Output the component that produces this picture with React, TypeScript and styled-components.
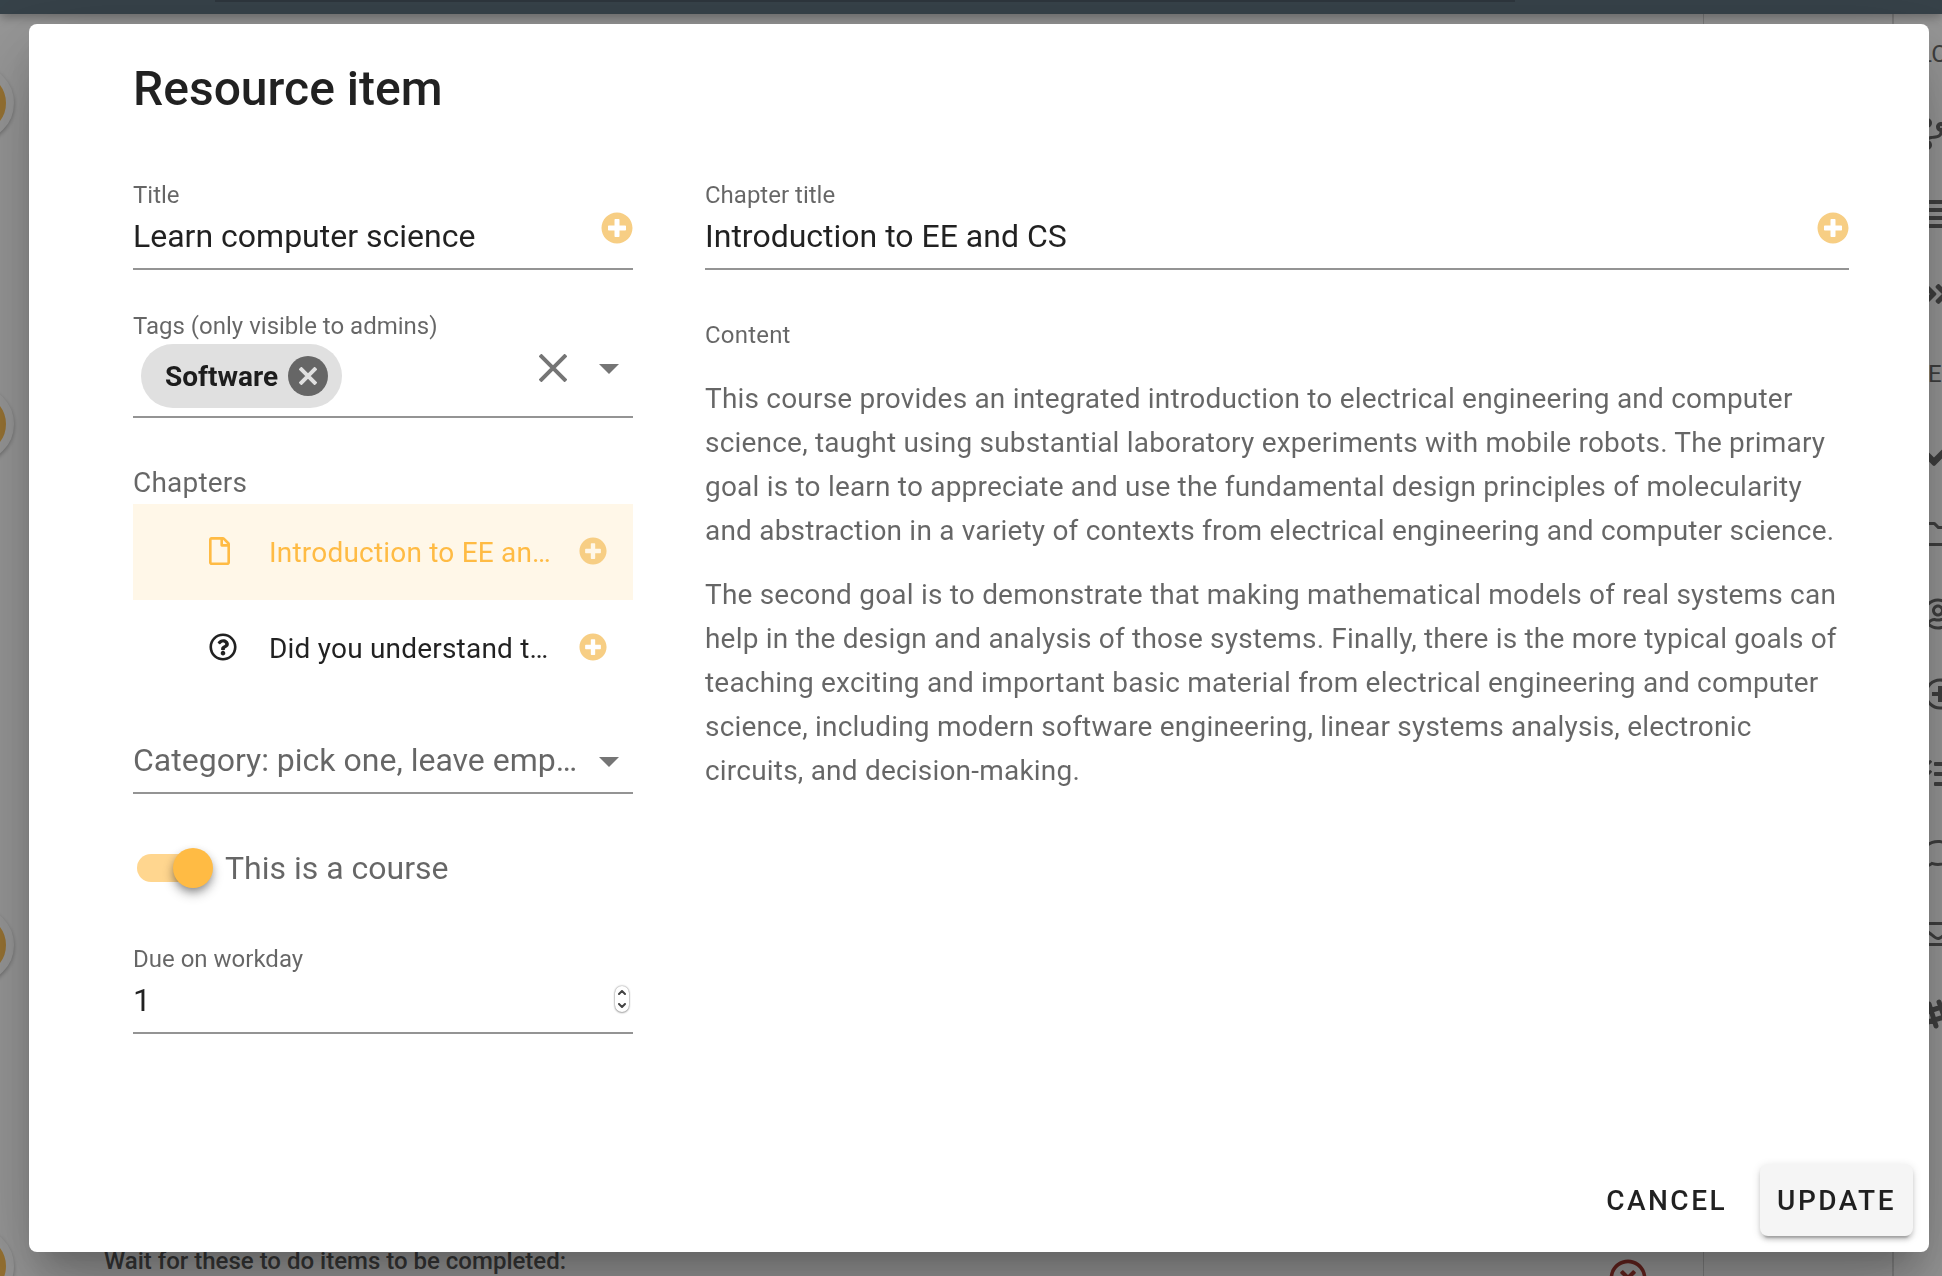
import React, { useState } from "react";
import styled, { createGlobalStyle, css } from "styled-components";
import {
  FaAlignJustify,
  FaAngleDoubleRight,
  FaCheck,
  FaCodeBranch,
  FaPlusCircle,
  FaRegComment,
  FaRegEnvelope,
  FaRegFile,
  FaRegFolder,
  FaRegQuestionCircle,
  FaRegTimesCircle,
  FaRegUserCircle,
  FaTasks,
} from "react-icons/fa";

const ink = "rgba(0, 0, 0, 0.87)";
const muted = "rgba(0, 0, 0, 0.6)";
const accent = "#ffbb44";
const bodySpacing = "0.2px";

const GlobalStyle = createGlobalStyle`
  *, *::before, *::after { box-sizing: border-box; }
  body {
    margin: 0;
    font-family: Roboto, "Liberation Sans", sans-serif;
    color: ${ink};
    background: #fff;
  }
  button, input, select { font: inherit; color: inherit; }
  button { border: 0; padding: 0; background: none; cursor: pointer; }
  svg { display: block; }
`;

/* ---------- page behind the dialog ---------- */

const Page = styled.div`
  height: 100vh;
  overflow: hidden;
  display: flex;
  flex-direction: column;
`;

const TopBar = styled.header`
  flex: none;
  height: 14px;
  padding: 0 427px 0 215px;
  background: #4c616e;
  box-shadow: 0 4px 10px rgba(0, 0, 0, 0.3);
  z-index: 1;
`;

const SearchStrip = styled.div`
  height: 2px;
  background: #3c4b58;
`;

const PageBody = styled.div`
  flex: 1;
  min-height: 0;
  display: flex;
`;

const Timeline = styled.ol`
  position: relative;
  width: 52px;
  margin: 0;
  padding: 0;
  list-style: none;
`;

const Dot = styled.li<{ $top: number }>`
  position: absolute;
  left: -62px;
  top: ${(p) => p.$top}px;
  width: 76px;
  height: 76px;
  border: 8px solid #fff;
  border-radius: 50%;
  background: ${accent};
  box-shadow: 0 2px 4px rgba(0, 0, 0, 0.3);
`;

const Cards = styled.main`
  flex: 1;
  display: flex;
  align-items: flex-end;
  justify-content: space-between;
  padding: 0 56px 0 52px;
  border-right: 1px solid #d0d0d0;
`;

const WaitText = styled.p`
  margin: 0 0 -1px;
  font-size: 24px;
  line-height: 32px;
  font-weight: 500;
  color: #4c4c4c;
`;

const Remove = styled.button`
  height: 17px;
  font-size: 38px;
  color: #a2281f;
  overflow: visible;
`;

const Gutter = styled.div`
  width: 190px;
  border-right: 2px solid #d6d6d6;
`;

const Sidebar = styled.nav`
  width: 48px;
  display: flex;
  flex-direction: column;
`;

const SideItem = styled.div<{ $indent?: number }>`
  flex: none;
  height: 80px;
  padding-left: ${(p) => p.$indent ?? 28}px;
  display: flex;
  align-items: center;
  font-size: 24px;
  color: #5c5c5c;

  svg {
    flex: none;
    width: 32px;
    height: 32px;
  }
`;

/* ---------- dialog ---------- */

const Overlay = styled.div`
  position: fixed;
  inset: 0;
  z-index: 2;
  display: flex;
  padding: 24px 13px 24px 29px;
  background: rgba(33, 33, 33, 0.46);
`;

const Dialog = styled.form`
  flex: 1;
  display: flex;
  flex-direction: column;
  padding: 33px 16px 16px;
  border-radius: 8px;
  background: #fff;
  box-shadow: 0 22px 30px -14px rgba(0, 0, 0, 0.2),
    0 48px 76px 6px rgba(0, 0, 0, 0.14), 0 18px 92px 16px rgba(0, 0, 0, 0.12);
`;

const Heading = styled.h1`
  margin: 0 88px;
  font-size: 48px;
  line-height: 64px;
  font-weight: 500;
`;

const Columns = styled.div`
  display: grid;
  grid-template-columns: 1fr 2fr;
  margin: 58px 64px 0 88px;
`;

const Side = styled.div`
  display: flex;
  flex-direction: column;
  gap: 40px;
  min-width: 0;
  padding-right: 72px;
`;

const Article = styled.div`
  min-width: 0;
`;

const Field = styled.div`
  display: flex;
  flex-direction: column;
`;

const Label = styled.label`
  font-size: 24px;
  line-height: 32px;
  color: ${muted};
`;

const Control = styled.div<{ $tall?: boolean }>`
  display: flex;
  align-items: flex-start;
  height: ${(p) => (p.$tall ? 76 : 59)}px;
  border-bottom: 2px solid #949494;
`;

const fieldText = css`
  flex: 1;
  min-width: 0;
  height: 50px;
  padding: 0;
  border: 0;
  outline: 0;
  background: none;
  font-size: 32px;
  appearance: none;
`;

const TextInput = styled.input`
  ${fieldText}
`;

const NumberInput = styled.input`
  ${fieldText}
  -moz-appearance: textfield;
  &::-webkit-inner-spin-button { display: none; }
`;

const Select = styled.select`
  ${fieldText}
  color: ${muted};
`;

const AddButton = styled.button<{ $size: number }>`
  flex: none;
  height: 34px;
  display: flex;
  align-items: center;
  font-size: ${(p) => p.$size}px;
  color: #f7ce84;
`;

const Chip = styled.span`
  display: flex;
  align-items: center;
  gap: 10px;
  height: 64px;
  margin: 2px auto 0 8px;
  padding: 0 14px 0 24px;
  border-radius: 32px;
  background: #e0e0e0;
  font-size: 28px;
  font-weight: 700;
`;

const ChipClose = styled.button`
  width: 40px;
  height: 40px;
  border-radius: 50%;
  background: #666;
  display: grid;
  place-items: center;
`;

const IconSlot = styled.button`
  height: 52px;
  display: flex;
  align-items: center;
  margin-right: 32px;
`;

const Caret = styled.span`
  flex: none;
  height: 53px;
  display: flex;
  align-items: center;
  margin-right: 14px;
  pointer-events: none;

  &::after {
    content: "";
    border: 10px solid transparent;
    border-top-color: #757575;
    border-bottom: 0;
  }
`;

const Chapters = styled.section`
  padding-top: 6px;
`;

const ChaptersTitle = styled.h2`
  margin: 0 0 2px;
  font-size: 28px;
  line-height: 38px;
  font-weight: 400;
  letter-spacing: ${bodySpacing};
  color: ${muted};
`;

const ChapterList = styled.ul`
  margin: 0 0 -1px;
  padding: 0;
  list-style: none;
`;

const ChapterRow = styled.li<{ $active?: boolean }>`
  display: flex;
  align-items: center;
  height: 96px;
  padding: 0 26px 2px 76px;
  color: ${(p) => (p.$active ? accent : ink)};
  background: ${(p) => (p.$active ? "#fff7e8" : "transparent")};
`;

const ChapterLink = styled.button`
  flex: 1;
  min-width: 0;
  display: grid;
  grid-template-columns: 60px 1fr;
  align-items: center;
  text-align: left;
  font-size: 28px;
  line-height: 40px;
  letter-spacing: ${bodySpacing};
  white-space: nowrap;
`;

const ChapterName = styled.span`
  padding-top: 4px;
`;

const SwitchRow = styled.label`
  display: flex;
  align-items: center;
  gap: 12px;
  height: 48px;
  margin: 10px 0 11px;
  padding-left: 4px;
  font-size: 32px;
  color: ${muted};
`;

const Switch = styled.input`
  appearance: none;
  flex: none;
  width: 76px;
  height: 28px;
  margin: 0;
  border-radius: 14px;
  background: linear-gradient(#ffd68f, #ffd68f) left / 60px 28px no-repeat;
  display: flex;
  align-items: center;

  &::before {
    content: "";
    width: 40px;
    height: 40px;
    border-radius: 50%;
    background: #bdbdbd;
    box-shadow: 0 4px 8px -2px rgba(0, 0, 0, 0.35), 0 6px 12px rgba(0, 0, 0, 0.24);
  }

  &:checked::before {
    margin-left: 36px;
    background: ${accent};
  }
`;

const Stepper = styled.span`
  flex: none;
  display: flex;
  flex-direction: column;
  width: 14px;
  height: 26px;
  margin: 11px 4px 0 0;
  border-radius: 7px;
  background: #fff;
  box-shadow: 0 0 2px rgba(0, 0, 0, 0.5), 0 1px 2px rgba(0, 0, 0, 0.25);
`;

const Step = styled.button`
  flex: 1;
  display: grid;
  place-items: center;
`;

const ContentLabel = styled.h2`
  margin: 48px 0 25px;
  font-size: 24px;
  line-height: 34px;
  font-weight: 400;
  letter-spacing: ${bodySpacing};
  color: ${muted};
`;

const Paragraph = styled.p`
  margin: 0 0 20px;
  font-size: 28px;
  line-height: 44px;
  letter-spacing: ${bodySpacing};
  color: ${muted};
`;

const Actions = styled.footer`
  display: flex;
  justify-content: flex-end;
  gap: 16px;
  margin-top: auto;
`;

const ActionButton = styled.button<{ $raised?: boolean }>`
  height: 72px;
  padding: 0 17px;
  border-radius: 8px;
  font-size: 28px;
  font-weight: 500;
  letter-spacing: 2.5px;
  color: ${ink};
  ${(p) =>
    p.$raised &&
    css`
      background: #f5f5f5;
      box-shadow: 0 6px 2px -4px rgba(0, 0, 0, 0.2),
        0 4px 4px rgba(0, 0, 0, 0.14), 0 2px 10px rgba(0, 0, 0, 0.12);
    `}
`;

const Cross = ({ size, color }: { size: number; color: string }) => (
  <svg width={size} height={size} viewBox={`0 0 ${size} ${size}`} stroke={color} strokeWidth="4">
    <path d={`M1 1L${size - 1} ${size - 1}M${size - 1} 1L1 ${size - 1}`} />
  </svg>
);

const Chevron = ({ up }: { up?: boolean }) => (
  <svg width="8" height="5" viewBox="0 0 8 5" fill="none" stroke="#444" strokeWidth="2" strokeLinecap="round" strokeLinejoin="round">
    <path d={up ? "M1 4L4 1L7 4" : "M1 1L4 4L7 1"} />
  </svg>
);

function PlusRing() {
  return (
    <svg viewBox="-2 0 32 32" fill="none" stroke="currentColor" strokeWidth="3">
      <circle cx="16" cy="16" r="14" />
      <path d="M8 16H24M16 8V24" strokeWidth="4" />
    </svg>
  );
}

function Hash() {
  return (
    <svg viewBox="0 0 32 32" fill="none" stroke="currentColor" strokeWidth="5" strokeLinecap="round">
      <path d="M7 6L14 28M17 4L24 24M4 14L26 7M6 24L28 17" />
    </svg>
  );
}

const sideIcons = [FaRegFolder, FaRegUserCircle, PlusRing, FaTasks, FaRegComment, FaRegEnvelope, Hash];

const paragraphs = [
  "This course provides an integrated introduction to electrical engineering and computer science, taught using substantial laboratory experiments with mobile robots. The primary goal is to learn to appreciate and use the fundamental design principles of molecularity and abstraction in a variety of contexts from electrical engineering and computer science.",
  "The second goal is to demonstrate that making mathematical models of real systems can help in the design and analysis of those systems. Finally, there is the more typical goals of teaching exciting and important basic material from electrical engineering and computer science, including modern software engineering, linear systems analysis, electronic circuits, and decision-making.",
];

export default function App() {
  const [title, setTitle] = useState("Learn computer science");
  const [chapterTitle, setChapterTitle] = useState("Introduction to EE and CS");
  const [course, setCourse] = useState(true);
  const [day, setDay] = useState(1);

  return (
    <>
      <GlobalStyle />
      <Page>
        <TopBar>
          <SearchStrip />
        </TopBar>
        <PageBody>
          <Timeline>
            {[51, 372, 893, 1214].map((top) => (
              <Dot key={top} $top={top} />
            ))}
          </Timeline>
          <Cards>
            <WaitText>Wait for these to do items to be completed:</WaitText>
            <Remove type="button">
              <FaRegTimesCircle />
            </Remove>
          </Cards>
          <Gutter />
          <Sidebar>
            <SideItem $indent={25}>LO</SideItem>
            <SideItem><FaCodeBranch preserveAspectRatio="xMinYMid" /></SideItem>
            <SideItem><FaAlignJustify /></SideItem>
            <SideItem><FaAngleDoubleRight preserveAspectRatio="xMinYMid" /></SideItem>
            <SideItem $indent={34}>E</SideItem>
            <SideItem><FaCheck /></SideItem>
            {sideIcons.map((Icon, i) => (
              <SideItem key={i}><Icon /></SideItem>
            ))}
          </Sidebar>
        </PageBody>
      </Page>

      <Overlay>
        <Dialog role="dialog" aria-labelledby="dialog-title" onSubmit={(e) => e.preventDefault()}>
          <Heading id="dialog-title">Resource item</Heading>
          <Columns>
            <Side>
              <Field>
                <Label htmlFor="title">Title</Label>
                <Control>
                  <TextInput id="title" value={title} onChange={(e) => setTitle(e.target.value)} />
                  <AddButton type="button" $size={32}><FaPlusCircle /></AddButton>
                </Control>
              </Field>

              <Field>
                <Label as="span">Tags (only visible to admins)</Label>
                <Control $tall>
                  <Chip>
                    Software
                    <ChipClose type="button"><Cross size={18} color="#e0e0e0" /></ChipClose>
                  </Chip>
                  <IconSlot type="button"><Cross size={28} color="#757575" /></IconSlot>
                  <Caret />
                </Control>
              </Field>

              <Chapters>
                <ChaptersTitle>Chapters</ChaptersTitle>
                <ChapterList>
                  <ChapterRow $active>
                    <ChapterLink type="button">
                      <FaRegFile preserveAspectRatio="xMinYMid" />
                      <ChapterName>Introduction to EE an…</ChapterName>
                    </ChapterLink>
                    <AddButton type="button" $size={28}><FaPlusCircle /></AddButton>
                  </ChapterRow>
                  <ChapterRow>
                    <ChapterLink type="button">
                      <FaRegQuestionCircle />
                      <ChapterName>Did you understand t…</ChapterName>
                    </ChapterLink>
                    <AddButton type="button" $size={28}><FaPlusCircle /></AddButton>
                  </ChapterRow>
                </ChapterList>
              </Chapters>

              <Control>
                <Select id="category" name="category">
                  <option>Category: pick one, leave emp…</option>
                </Select>
                <Caret />
              </Control>

              <SwitchRow>
                <Switch type="checkbox" role="switch" checked={course} onChange={(e) => setCourse(e.target.checked)} />
                This is a course
              </SwitchRow>

              <Field>
                <Label htmlFor="due">Due on workday</Label>
                <Control>
                  <NumberInput id="due" type="number" value={day} onChange={(e) => setDay(Number(e.target.value))} />
                  <Stepper>
                    <Step type="button" onClick={() => setDay(day + 1)}><Chevron up /></Step>
                    <Step type="button" onClick={() => setDay(day - 1)}><Chevron /></Step>
                  </Stepper>
                </Control>
              </Field>
            </Side>

            <Article>
              <Field>
                <Label htmlFor="chapter-title">Chapter title</Label>
                <Control>
                  <TextInput id="chapter-title" value={chapterTitle} onChange={(e) => setChapterTitle(e.target.value)} />
                  <AddButton type="button" $size={32}><FaPlusCircle /></AddButton>
                </Control>
              </Field>
              <ContentLabel>Content</ContentLabel>
              {paragraphs.map((text) => (
                <Paragraph key={text}>{text}</Paragraph>
              ))}
            </Article>
          </Columns>
          <Actions>
            <ActionButton type="button">CANCEL</ActionButton>
            <ActionButton type="submit" $raised>UPDATE</ActionButton>
          </Actions>
        </Dialog>
      </Overlay>
    </>
  );
}
